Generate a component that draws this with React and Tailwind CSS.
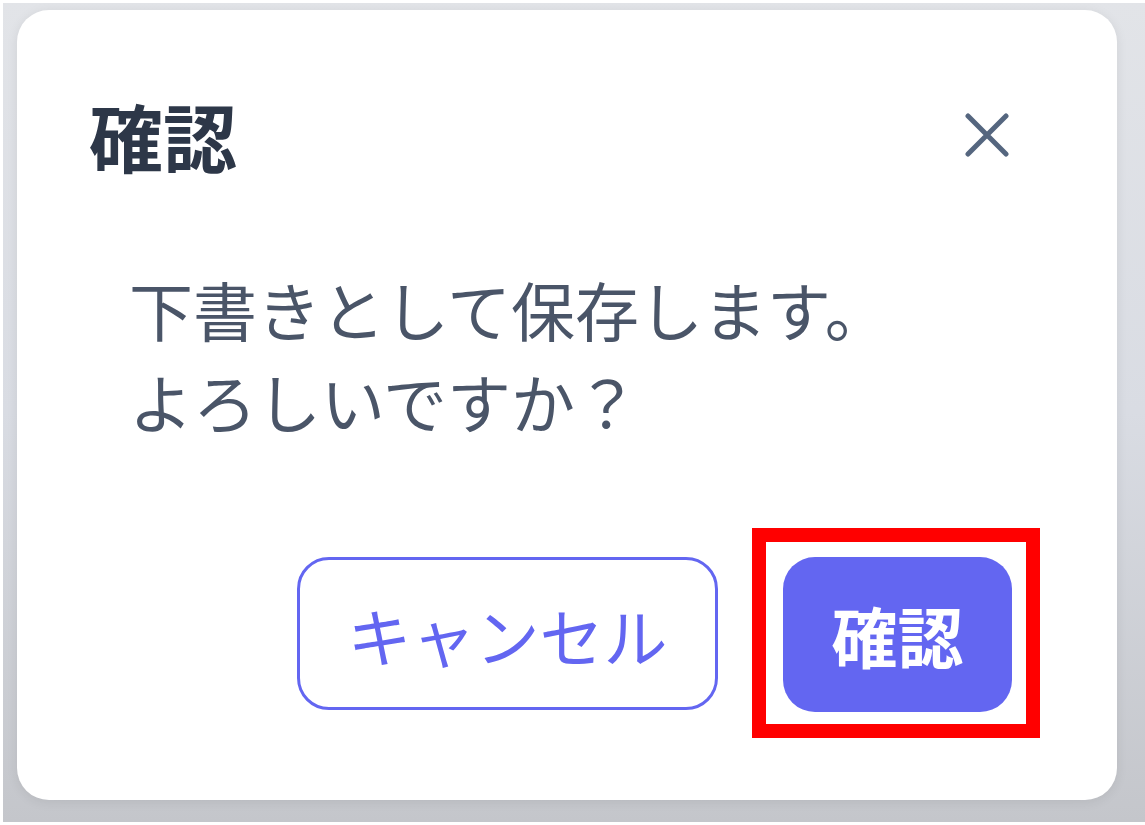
import React from "react";

const font = { fontFamily: '"Noto Sans CJK JP", "Noto Sans", sans-serif' };

export default function App() {
  return (
    <div className="w-[1145px] h-[825px] bg-white pt-[3px] pl-[3px] pb-[3px]" style={font}>
      <div className="w-full h-full bg-gradient-to-b from-[#e2e4e8] via-[#d9dce3] to-[#c4c6cb] pl-[14px] pt-[7px]">
        <div className="w-[1100px] h-[790px] bg-white rounded-[32px] shadow-[0_2px_12px_rgba(0,0,0,0.08)] flex flex-col">
          <div className="flex items-center justify-between pl-[72px] pr-[106px] pt-[88px]">
            <h1 className="text-[74px] leading-none font-bold text-[#2d3748]">確認</h1>
            <button className="w-[48px] h-[48px] flex items-center justify-center text-[#55667f]">
              <svg width="44" height="44" viewBox="0 0 44 44" fill="none" stroke="currentColor" strokeWidth="5" strokeLinecap="round">
                <path d="M3 3 L41 41 M41 3 L3 41" />
              </svg>
            </button>
          </div>
          <div className="pl-[112px] pt-[90px] text-[64px] leading-[92px] text-[#4a5568]">
            <p>下書きとして保存します。</p>
            <p>よろしいですか？</p>
          </div>
          <div className="flex justify-end gap-[65px] pr-[105px] mt-auto mb-[88px]">
            <button className="w-[421px] h-[153px] rounded-[32px] border-[3px] border-[#6366f1] text-[#6366f1] text-[64px]">
              キャンセル
            </button>
            <div className="relative">
              <button className="w-[229px] h-[155px] rounded-[32px] bg-[#6366f1] text-white text-[66px] font-bold">
                確認
              </button>
              <div className="absolute left-[-31px] top-[-29px] right-[-28px] bottom-[-26px] border-[14px] border-[#ff0000]" />
            </div>
          </div>
        </div>
      </div>
    </div>
  );
}
